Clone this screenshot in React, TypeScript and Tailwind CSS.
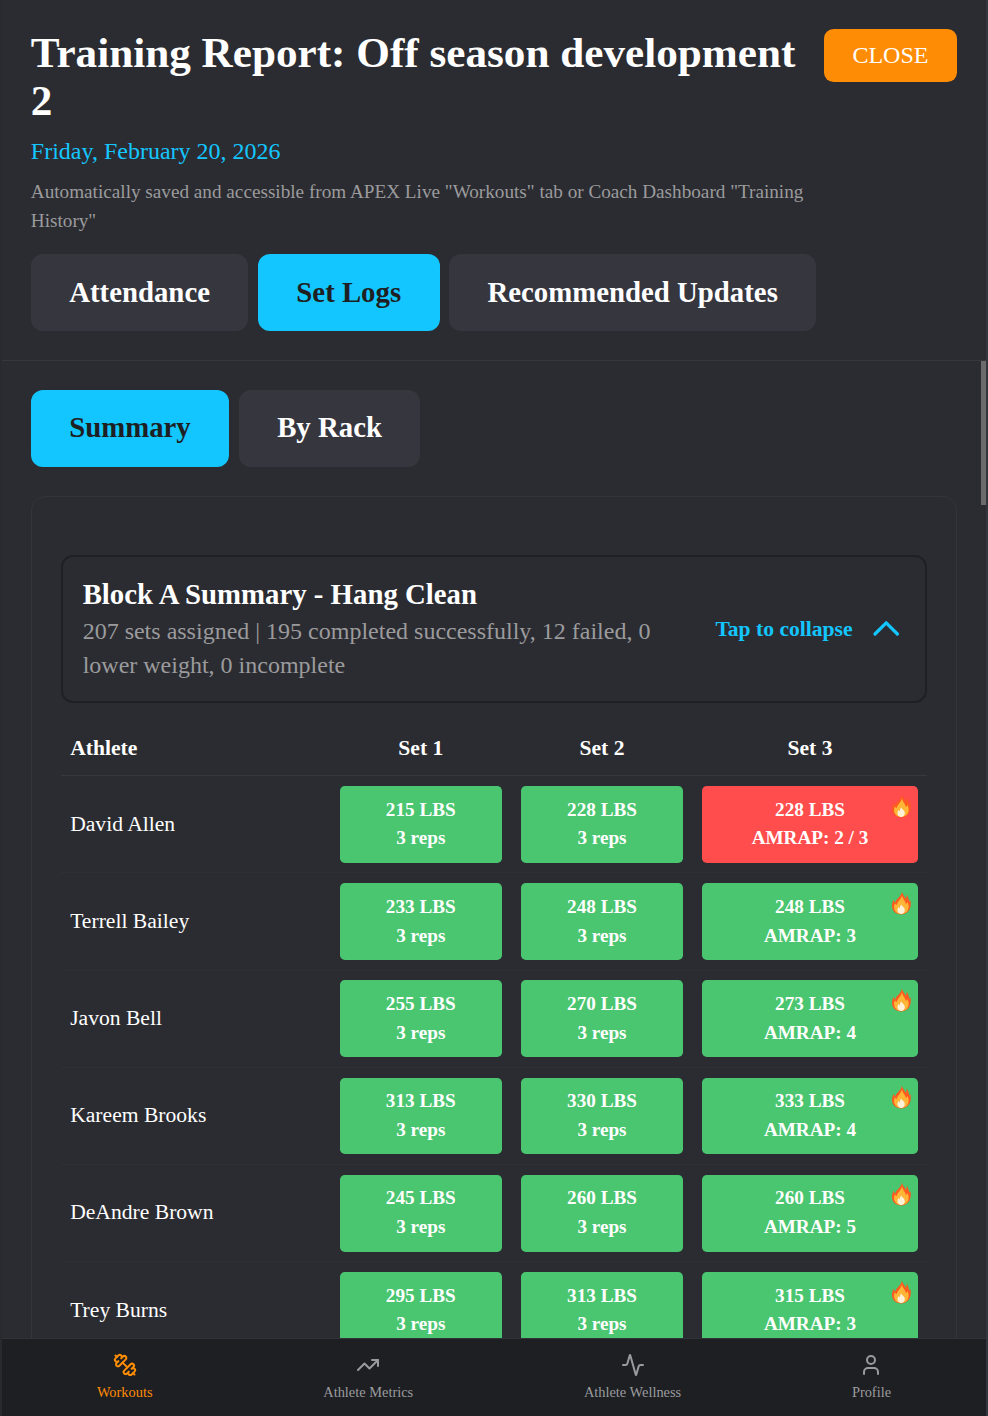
import React, { useState } from 'react';
import { Activity, Dumbbell, TrendingUp, User } from 'lucide-react';
import clsx from 'clsx';

interface SetResult {
  weight: number;
  reps: string;
  failed?: boolean;
}

interface AthleteRow {
  name: string;
  sets: SetResult[];
}

const REPORT_TABS = ['Attendance', 'Set Logs', 'Recommended Updates'];
const VIEW_TABS = ['Summary', 'By Rack'];

const ATHLETES: AthleteRow[] = [
  { name: 'David Allen', sets: [{ weight: 215, reps: '3 reps' }, { weight: 228, reps: '3 reps' }, { weight: 228, reps: 'AMRAP: 2 / 3', failed: true }] },
  { name: 'Terrell Bailey', sets: [{ weight: 233, reps: '3 reps' }, { weight: 248, reps: '3 reps' }, { weight: 248, reps: 'AMRAP: 3' }] },
  { name: 'Javon Bell', sets: [{ weight: 255, reps: '3 reps' }, { weight: 270, reps: '3 reps' }, { weight: 273, reps: 'AMRAP: 4' }] },
  { name: 'Kareem Brooks', sets: [{ weight: 313, reps: '3 reps' }, { weight: 330, reps: '3 reps' }, { weight: 333, reps: 'AMRAP: 4' }] },
  { name: 'DeAndre Brown', sets: [{ weight: 245, reps: '3 reps' }, { weight: 260, reps: '3 reps' }, { weight: 260, reps: 'AMRAP: 5' }] },
  { name: 'Trey Burns', sets: [{ weight: 295, reps: '3 reps' }, { weight: 313, reps: '3 reps' }, { weight: 315, reps: 'AMRAP: 3' }] },
];

const NAV_ITEMS = [
  { label: 'Workouts', icon: Dumbbell, iconClass: '-scale-x-100' },
  { label: 'Athlete Metrics', icon: TrendingUp },
  { label: 'Athlete Wellness', icon: Activity },
  { label: 'Profile', icon: User },
];

const Flame = () => (
  <svg viewBox="0 0 20 24" className="absolute top-[6.4px] right-[5px] w-[17px] h-5">
    <path d="M10.600.5c.3 2.500 2.800 4.300 3.800 7.300.9-1 1.200-2.500.9-4.300 2.500 2.900 1.700 5 3.100 7 .6-.5.700-1.200.7-1.800.6 2 .6 4.300.3 6.300-.7 5-4.300 8.400-9.400 8.400S1.200 20.400.8 15.500c-.2-2.800.8-5 1.900-7 .1 1.500.5 2.400 1.300 3.200C4.900 7.300 10.100 6 10.600.5z" fill="#ff5a1f" />
    <path d="M10.700 4c.2 3.500 3.300 5.200 4 9 .7-.4 1.200-1 1.400-2 1.300 2 1.700 4.300 1.200 6.200-.8 3.700-3.700 5.700-7.300 5.700s-6.300-2.200-7-5.500c-.4-2 0-3.700.8-5.200.4.900.9 1.500 1.700 1.900C6.200 10.200 10.400 8.300 10.700 4z" fill="#ffb636" />
    <path d="M10 13.500c.5 1.700 3.300 2.500 3.600 5 .3 2.700-1.500 4.500-3.700 4.500s-3.800-1.900-3.600-4.400c.1-1.100.6-1.800 1.100-2.500.2.700.6 1.100 1.200 1.300-.1-1.500.6-2.800 1.400-3.900z" fill="#fff0d8" />
  </svg>
);

interface TabsProps {
  tabs: string[];
  active: string;
  onSelect: (tab: string) => void;
}

const Tabs: React.FC<TabsProps> = ({ tabs, active, onSelect }) => (
  <div className="flex gap-2">
    {tabs.map(tab => (
      <button
        key={tab}
        onClick={() => onSelect(tab)}
        className={clsx(
          'h-16 px-8 pb-px rounded-[10px] text-2xl font-bold whitespace-nowrap',
          tab === active ? 'bg-[#14c6ff] text-[#1e1f23]' : 'bg-[#36363f] text-white'
        )}
      >
        {tab}
      </button>
    ))}
  </div>
);

export default function App() {
  const [reportTab, setReportTab] = useState('Set Logs');
  const [view, setView] = useState('Summary');
  const [expanded, setExpanded] = useState(true);

  return (
    <div className="[zoom:1.2] relative flex flex-col h-[1180px] overflow-hidden bg-[#2b2c31] border-x-2 border-l-[#292a2e] border-r-[#35363d] text-white font-['Liberation_Serif',serif]">
      {/* Header */}
      <header className="shrink-0 p-6 border-b border-[#37373f]">
        <div className="flex items-start justify-between mb-4">
          <div className="flex-1">
            <h1 className="text-4xl font-bold">Training Report: Off season development 2</h1>
            <p className="mt-[8.6px] text-xl text-[#14c6ff]">Friday, February 20, 2026</p>
            <p className="mt-[7.6px] -mb-[0.2px] text-base text-[#9b9b9d]">
              Automatically saved and accessible from APEX Live "Workouts" tab or Coach Dashboard "Training History"
            </p>
          </div>
          <button className="shrink-0 h-11 px-6 pt-px rounded-lg bg-[#ff8c05] text-xl">CLOSE</button>
        </div>
        <Tabs tabs={REPORT_TABS} active={reportTab} onSelect={setReportTab} />
      </header>

      {/* Content */}
      <main className="relative flex-1 min-h-0 overflow-hidden p-6">
        <div className="absolute top-0 right-0 w-1 h-[120px] bg-[#6b6b6e]" />
        <Tabs tabs={VIEW_TABS} active={view} onSelect={setView} />

        <div className="mt-[24.6px] p-6 border border-[#34353b] rounded-xl">
          <button
            onClick={() => setExpanded(!expanded)}
            className="mt-6 mb-4 w-full flex items-center justify-between gap-4 px-[16.7px] pt-[15.6px] pb-[15.4px] border-2 border-[#1f2024] rounded-[10px] text-left"
          >
            <div>
              <h2 className="text-2xl font-bold">Block A Summary - Hang Clean</h2>
              <p className="mt-px text-xl text-[#9b9b9d]">
                207 sets assigned | 195 completed successfully, 12 failed, 0 lower weight, 0 incomplete
              </p>
            </div>
            <div className="shrink-0 flex items-center gap-3 pt-px text-[#14c6ff]">
              <span className="text-lg font-bold">{expanded ? 'Tap to collapse' : 'Tap to expand'}</span>
              <svg viewBox="0 0 24 24" fill="none" stroke="currentColor" strokeWidth="2" strokeLinecap="round" strokeLinejoin="round" className={clsx('w-8 h-8', !expanded && 'rotate-180')}>
                <path d="M5 15l7-7 7 7" />
              </svg>
            </div>
          </button>

          {expanded && (
            <table className="w-full table-fixed border-collapse">
              <thead>
                <tr className="h-[45px] border-b border-[#37373f] text-lg">
                  <th className="p-2 text-left">Athlete</th>
                  <th className="w-[151px] p-2">Set 1</th>
                  <th className="w-[151px] p-2">Set 2</th>
                  <th className="w-[195.7px] p-2">Set 3</th>
                </tr>
              </thead>
              <tbody>
                {ATHLETES.map(athlete => (
                  <tr key={athlete.name} className="h-[81px] border-b border-[#2f3035]">
                    <td className="p-2 text-lg">{athlete.name}</td>
                    {athlete.sets.map((set, i) => (
                      <td key={i} className="p-2">
                        <div className={clsx('relative h-16 p-2 rounded text-base font-bold text-center', set.failed ? 'bg-[#ff4d4d]' : 'bg-[#4ac570]')}>
                          <div>{set.weight} LBS</div>
                          <div>{set.reps}</div>
                          {i === 2 && <Flame />}
                        </div>
                      </td>
                    ))}
                  </tr>
                ))}
              </tbody>
            </table>
          )}
        </div>
      </main>

      {/* Bottom navigation */}
      <nav className="shrink-0 flex justify-around px-2 pt-[11.4px] pb-[11.4px] bg-[#1e1f23] border-t border-[#323338]">
        {NAV_ITEMS.map(({ label, icon: Icon, iconClass }) => (
          <button key={label} className={clsx('flex flex-col items-center gap-[5.2px] text-xs', label === 'Workouts' ? 'text-[#ff8c05]' : 'text-[#9b9b9d]')}>
            <Icon className={clsx('w-5 h-5', iconClass)} />
            {label}
          </button>
        ))}
      </nav>
    </div>
  );
}
